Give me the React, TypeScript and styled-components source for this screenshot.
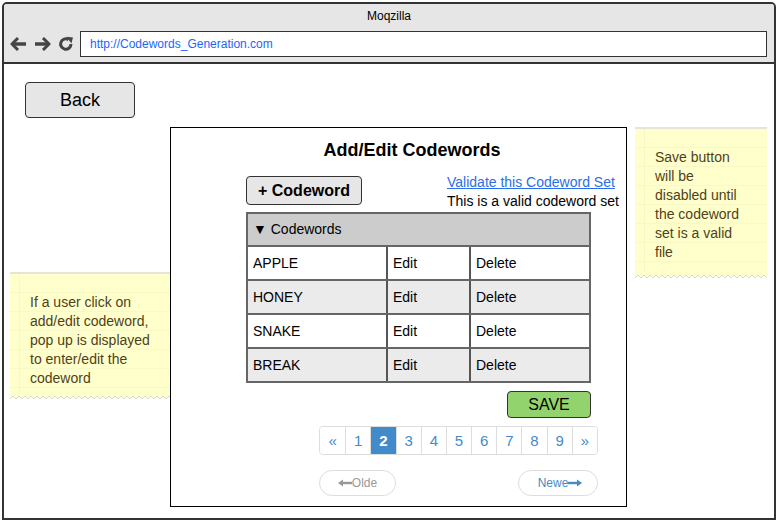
import React from "react";
import styled, { createGlobalStyle } from "styled-components";

type Codeword = {
  word: string;
};

const codewords: Codeword[] = [
  { word: "APPLE" },
  { word: "HONEY" },
  { word: "SNAKE" },
  { word: "BREAK" },
];

const pages = ["«", "1", "2", "3", "4", "5", "6", "7", "8", "9", "»"];

const GlobalStyle = createGlobalStyle`
  body {
    margin: 0;
    font-family: "Liberation Sans", Arial, sans-serif;
    background: #fff;
  }
  * {
    box-sizing: border-box;
  }
`;

const BackIcon = () => (
  <svg width="17" height="16" viewBox="0 0 17 16">
    <path d="M8 2 L2 8 L8 14" fill="none" stroke="#444" strokeWidth="3" strokeLinejoin="round" />
    <path d="M3 8 H16" stroke="#444" strokeWidth="3.4" />
  </svg>
);

const ForwardIcon = () => (
  <svg width="17" height="16" viewBox="0 0 17 16">
    <path d="M9 2 L15 8 L9 14" fill="none" stroke="#444" strokeWidth="3" strokeLinejoin="round" />
    <path d="M1 8 H14" stroke="#444" strokeWidth="3.4" />
  </svg>
);

const ReloadIcon = () => (
  <svg width="16" height="16" viewBox="0 0 16 16">
    <path d="M13 8 A5.2 5.2 0 1 1 10.5 3.6" fill="none" stroke="#444" strokeWidth="3" />
    <path d="M8.5 0.8 L15 1.6 L13.4 7.6 Z" fill="#444" />
  </svg>
);

const ArrowLeft = () => (
  <svg width="14" height="8" viewBox="0 0 14 8">
    <path d="M0 4 L5 0.5 V7.5 Z" fill="currentColor" />
    <path d="M4 4 H14" stroke="currentColor" strokeWidth="2.4" />
  </svg>
);

const ArrowRight = () => (
  <svg width="14" height="8" viewBox="0 0 14 8">
    <path d="M14 4 L9 0.5 V7.5 Z" fill="currentColor" />
    <path d="M0 4 H10" stroke="currentColor" strokeWidth="2.4" />
  </svg>
);

const App: React.FC = () => {
  return (
    <>
      <GlobalStyle />
      <Frame>
        <TitleBar>
          <WindowTitle>Moqzilla</WindowTitle>
          <NavRow>
            <NavIcons>
              <BackIcon />
              <ForwardIcon />
              <ReloadIcon />
            </NavIcons>
            <AddressBar>http://Codewords_Generation.com</AddressBar>
          </NavRow>
        </TitleBar>

        <Content>
          <BackRow>
            <BackButton>Back</BackButton>
          </BackRow>

          <Main>
            <StickyNote $width={160} $height={126} $top={145}>
              If a user click on add/edit codeword, pop up is displayed to
              enter/edit the codeword
            </StickyNote>

            <Dialog>
              <DialogTitle>Add/Edit Codewords</DialogTitle>
              <DialogBody>
                <TopRow>
                  <AddButton>+ Codeword</AddButton>
                  <ValidateBlock>
                    <ValidateLink href="#">Validate this Codeword Set</ValidateLink>
                    <ValidText>This is a valid codeword set</ValidText>
                  </ValidateBlock>
                </TopRow>

                <Table>
                  <TableHeader>▼ Codewords</TableHeader>
                  {codewords.map((c, i) => (
                    <TableRow key={c.word} $striped={i % 2 === 1}>
                      <Cell>{c.word}</Cell>
                      <Cell>Edit</Cell>
                      <Cell>Delete</Cell>
                    </TableRow>
                  ))}
                </Table>

                <SaveRow>
                  <SaveButton>SAVE</SaveButton>
                </SaveRow>

                <Pagination>
                  {pages.map((p) => (
                    <PageItem key={p} $active={p === "2"}>
                      {p}
                    </PageItem>
                  ))}
                </Pagination>

                <PagerRow>
                  <PagerButton $muted>
                    <ArrowLeft />
                    Olde
                  </PagerButton>
                  <PagerButton>
                    Newe
                    <ArrowRight />
                  </PagerButton>
                </PagerRow>
              </DialogBody>
            </Dialog>

            <StickyNote $width={132} $height={150} $top={0}>
              Save button will be disabled until the codeword set is a valid
              file
            </StickyNote>
          </Main>
        </Content>
      </Frame>
    </>
  );
};

export default App;

// Styled Components
const Frame = styled.div`
  margin: 2px 0 0 2px;
  width: 774px;
  height: 518px;
  border: 2px solid #333;
  border-radius: 5px 5px 0 0;
  overflow: hidden;
  display: flex;
  flex-direction: column;
`;

const TitleBar = styled.div`
  height: 60px;
  background: #e6e6e6;
  border-bottom: 2px solid #333;
  flex-shrink: 0;
`;

const WindowTitle = styled.div`
  height: 24px;
  line-height: 24px;
  text-align: center;
  font-size: 12px;
  color: #000;
`;

const NavRow = styled.div`
  display: flex;
  align-items: center;
  margin-top: 3px;
  height: 26px;
  padding: 0 7px 0 6px;
`;

const NavIcons = styled.div`
  display: flex;
  align-items: center;
  gap: 7px;
  width: 70px;
`;

const AddressBar = styled.div`
  flex: 1;
  height: 26px;
  background: #fff;
  border: 1px solid #333;
  padding-left: 9px;
  font-size: 12px;
  line-height: 24px;
  color: #1a66ff;
`;

const Content = styled.div`
  flex: 1;
  background: #fff;
  padding-top: 18px;
`;

const BackRow = styled.div`
  padding-left: 21px;
`;

const BackButton = styled.button`
  width: 110px;
  height: 36px;
  background: #e6e6e6;
  border: 1px solid #333;
  border-radius: 4px;
  font-family: "Liberation Sans", Arial, sans-serif;
  font-size: 18px;
  color: #000;
  padding: 0;
`;

const Main = styled.div`
  display: flex;
  align-items: flex-start;
  margin-top: 9px;
  padding-left: 6px;
`;

const StickyNote = styled.div<{ $width: number; $height: number; $top: number }>`
  position: relative;
  flex-shrink: 0;
  width: ${(p) => p.$width}px;
  height: ${(p) => p.$height - 5}px;
  margin-top: ${(p) => p.$top}px;
  padding: 19px 18px 0 20px;
  font-size: 14px;
  line-height: 19px;
  color: #4f3f1a;
  border-top: 2px solid #e4e4dc;
  background-color: #ffffcc;
  background-image: linear-gradient(
      to right,
      transparent 9px,
      rgba(240, 215, 170, 0.25) 9px,
      rgba(240, 215, 170, 0.25) 10px,
      transparent 10px
    ),
    repeating-linear-gradient(
      to bottom,
      transparent 0,
      transparent 18px,
      rgba(225, 225, 185, 0.22) 18px,
      rgba(225, 225, 185, 0.22) 19px
    );

  &:last-child {
    margin-left: 8px;
    padding-right: 22px;
  }

  &::after {
    content: "";
    position: absolute;
    left: 0;
    right: 0;
    bottom: -5px;
    height: 5px;
    background: linear-gradient(135deg, #ffffcc 50%, transparent 50%) 0 0 / 6px 6px repeat-x,
      linear-gradient(225deg, #ffffcc 50%, transparent 50%) 0 0 / 6px 6px repeat-x;
    filter: drop-shadow(0 1px 0 #d8d8d0);
  }
`;

const Dialog = styled.div`
  flex-shrink: 0;
  width: 457px;
  height: 380px;
  border: 1px solid #000;
  background: #fff;
`;

const DialogTitle = styled.div`
  padding: 10px 0 0 27px;
  height: 34px;
  line-height: 24px;
  text-align: center;
  font-size: 18px;
  font-weight: bold;
  color: #000;
`;

const DialogBody = styled.div`
  margin-top: 14px;
  padding-left: 75px;
`;

const TopRow = styled.div`
  display: flex;
  align-items: flex-start;
  height: 29px;
`;

const AddButton = styled.button`
  width: 116px;
  height: 29px;
  background: #e6e6e6;
  border: 1px solid #333;
  border-radius: 4px;
  font-family: "Liberation Sans", Arial, sans-serif;
  font-size: 16px;
  font-weight: bold;
  color: #000;
  padding: 0;
`;

const ValidateBlock = styled.div`
  display: flex;
  flex-direction: column;
  margin: -3px 0 0 85px;
  font-size: 14px;
  line-height: 19px;
  white-space: nowrap;
`;

const ValidateLink = styled.a`
  color: #2a6ee8;
  text-decoration: underline;
`;

const ValidText = styled.span`
  color: #000;
`;

const Table = styled.div`
  margin-top: 7px;
  width: 345px;
  border: 2px solid #666;
`;

const TableHeader = styled.div`
  height: 31px;
  line-height: 31px;
  padding-left: 5px;
  background: #cccccc;
  font-size: 14px;
  color: #000;
`;

const TableRow = styled.div<{ $striped: boolean }>`
  display: grid;
  grid-template-columns: 140px 83px 118px;
  height: 34px;
  border-top: 2px solid #666;
  background: ${(p) => (p.$striped ? "#ebebeb" : "#fff")};
`;

const Cell = styled.div`
  padding-left: 5px;
  line-height: 32px;
  font-size: 14px;
  color: #000;

  &:not(:last-child) {
    border-right: 2px solid #555;
  }
`;

const SaveRow = styled.div`
  display: flex;
  justify-content: flex-end;
  width: 345px;
  margin-top: 8px;
`;

const SaveButton = styled.button`
  width: 84px;
  height: 27px;
  background: #92d36e;
  border: 1px solid #333;
  border-radius: 4px;
  font-family: "Liberation Sans", Arial, sans-serif;
  font-size: 16px;
  color: #000;
  padding: 0;
`;

const Pagination = styled.div`
  display: grid;
  grid-template-columns: repeat(11, 1fr);
  width: 279px;
  height: 29px;
  margin: 8px 0 0 73px;
  border: 1px solid #ddd;
  border-radius: 4px;
  overflow: hidden;
`;

const PageItem = styled.div<{ $active: boolean }>`
  display: flex;
  align-items: center;
  justify-content: center;
  font-size: 15px;
  font-weight: ${(p) => (p.$active ? "bold" : "normal")};
  color: ${(p) => (p.$active ? "#fff" : "#428bca")};
  background: ${(p) => (p.$active ? "#428bca" : "#fff")};

  &:not(:first-child) {
    border-left: 1px solid #ddd;
  }
`;

const PagerRow = styled.div`
  display: flex;
  justify-content: space-between;
  width: 279px;
  margin: 15px 0 0 73px;
`;

const PagerButton = styled.div<{ $muted?: boolean }>`
  display: flex;
  align-items: center;
  justify-content: center;
  width: ${(p) => (p.$muted ? 77 : 80)}px;
  height: 26px;
  border: 1px solid #ddd;
  border-radius: 15px;
  font-size: 12px;
  color: ${(p) => (p.$muted ? "#999" : "#428bca")};
  padding-left: ${(p) => (p.$muted ? 0 : 4)}px;
`;
